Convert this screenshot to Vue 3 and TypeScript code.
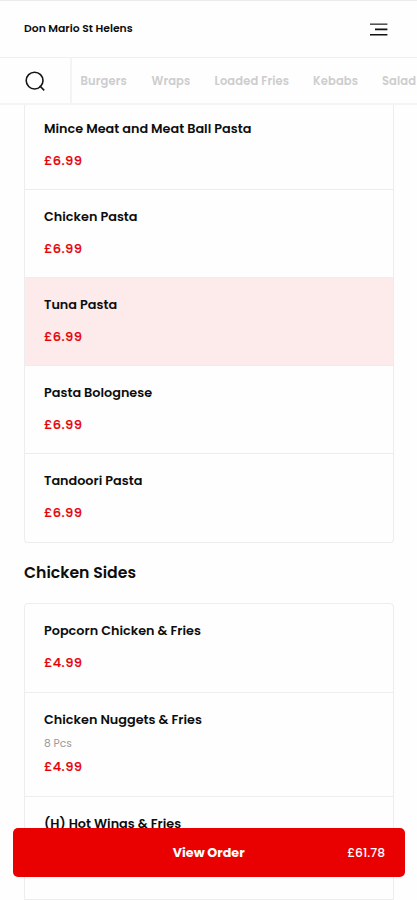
<script setup lang="ts">
interface MenuItem {
  name: string
  price: string
  note?: string
  active?: boolean
}

interface Category {
  label: string
  width: number
}

const categories: Category[] = [
  { label: 'Burgers', width: 47 },
  { label: 'Wraps', width: 39 },
  { label: 'Loaded Fries', width: 74.5 },
  { label: 'Kebabs', width: 45 },
  { label: 'Salad', width: 40 },
]

const pastas: MenuItem[] = [
  { name: 'Mince Meat and Meat Ball Pasta', price: '£6.99' },
  { name: 'Chicken Pasta', price: '£6.99' },
  { name: 'Tuna Pasta', price: '£6.99', active: true },
  { name: 'Pasta Bolognese', price: '£6.99' },
  { name: 'Tandoori Pasta', price: '£6.99' },
]

const sides: MenuItem[] = [
  { name: 'Popcorn Chicken & Fries', price: '£4.99' },
  { name: 'Chicken Nuggets & Fries', note: '8 Pcs', price: '£4.99' },
  { name: '(H) Hot Wings & Fries', price: '£4.99' },
]
</script>

<template>
  <div class="screen">
    <header class="topbar">
      <h1 class="brand">Don Mario St Helens</h1>
      <button class="icon-btn" aria-label="Menu">
        <svg width="18" height="13" viewBox="0 0 18 13">
          <path d="M0 1.2H17.4" stroke="#555" stroke-width="1.6" />
          <path d="M5 6.4H17.4M0 11.8H17.4" stroke="#111" stroke-width="1.6" />
        </svg>
      </button>
    </header>
    <nav class="tabs">
      <button class="icon-btn search" aria-label="Search">
        <svg width="21" height="21" viewBox="0 0 21 21" fill="none" stroke="#151515" stroke-width="1.6">
          <circle cx="9.6" cy="9.6" r="8.4" />
          <path d="M14.6 14.8L19.2 19.4" />
        </svg>
      </button>
      <div class="cats">
        <a v-for="c in categories" :key="c.label" class="cat" :style="{ width: c.width + 'px' }">{{ c.label }}</a>
      </div>
    </nav>
    <main class="menu">
      <section class="card first">
        <article v-for="i in pastas" :key="i.name" class="row" :class="{ active: i.active }">
          <h3 class="name">{{ i.name }}</h3>
          <p class="price">{{ i.price }}</p>
        </article>
      </section>
      <h2 class="heading">Chicken Sides</h2>
      <section class="card sides">
        <article v-for="i in sides" :key="i.name" class="row" :class="{ noted: i.note }">
          <h3 class="name">{{ i.name }}</h3>
          <p v-if="i.note" class="note">{{ i.note }}</p>
          <p class="price">{{ i.price }}</p>
        </article>
      </section>
    </main>
    <button class="order">
      <span></span>
      <span class="order-label">View Order</span>
      <span class="order-total">£61.78</span>
    </button>
  </div>
</template>

<style>
body {
  background: #fff;
}
</style>

<style scoped>
.screen {
  position: relative;
  display: flex;
  flex-direction: column;
  box-sizing: border-box;
  width: 100%;
  height: 900px;
  overflow: hidden;
  border-top: 1px solid #ebebeb;
  background: #fefefe;
  color: #0d0d0d;
  font-family: Poppins, Inter, "Liberation Sans", sans-serif;
}
h1, h2, h3, p {
  margin: 0;
}
button {
  font-family: inherit;
  border: 0;
  padding: 0;
}
.topbar {
  flex: none;
  display: flex;
  align-items: center;
  justify-content: space-between;
  box-sizing: border-box;
  height: 57px;
  padding: 0 29.5px 0 24px;
  border-bottom: 1px solid #f0f0f0;
}
.brand {
  font-size: 10.8px;
  font-weight: 600;
  line-height: 16px;
}
.icon-btn {
  display: flex;
  background: none;
}
.tabs {
  flex: none;
  position: relative;
  z-index: 1;
  display: flex;
  box-sizing: border-box;
  height: 47px;
  border-bottom: 2px solid #f4f4f4;
  background: #fefefe;
}
.search {
  flex: none;
  box-sizing: border-box;
  width: 72px;
  align-items: center;
  padding: 1px 0 0 25px;
  border-right: 2px solid #f4f4f4;
}
.cats {
  display: flex;
  align-items: center;
  gap: 24px;
  padding: 1px 0 0 8.5px;
  overflow: hidden;
}
.cat {
  flex: none;
  font-size: 11.5px;
  font-weight: 600;
  line-height: 16px;
  letter-spacing: 0.12px;
  color: #cdcdcd;
  white-space: nowrap;
}
.menu {
  display: flex;
  flex-direction: column;
  padding: 0 23.5px;
}
.card {
  flex: none;
  border: 1px solid #ededed;
  border-radius: 4px;
}
.card.first {
  margin-top: -3px;
  border-top: 0;
  border-radius: 0 0 4px 4px;
}
.card.sides {
  border-radius: 4px 4px 0 0;
}
.row {
  box-sizing: border-box;
  height: 88.2px;
  padding: 17px 19.5px 0;
  border-bottom: 1px solid #ededed;
}
.first .row:nth-child(n + 3) {
  height: 88px;
}
.row:last-child {
  border-bottom: 0;
}
.first .row:last-child {
  height: 87.6px;
}
.row.active {
  background: #fdeaea;
}
.sides .row:first-child {
  height: 89px;
}
.sides .row.noted {
  height: 103.6px;
}
.sides .row:last-child {
  height: 102.6px;
}
.name {
  font-size: 12.8px;
  font-weight: 600;
  line-height: 20px;
  white-space: nowrap;
}
.price {
  margin-top: 12px;
  font-size: 13px;
  font-weight: 500;
  line-height: 20px;
  color: #e60008;
  letter-spacing: 0.4px;
  -webkit-text-stroke: 0.2px #e60008;
}
.note {
  margin-top: 6px;
  font-size: 10.7px;
  line-height: 16px;
  color: #999;
}
.noted .price {
  margin-top: 5px;
}
.heading {
  margin: 18px 0;
  padding-left: 0.5px;
  font-size: 15.7px;
  font-weight: 600;
  line-height: 24px;
}
.order {
  position: absolute;
  z-index: 2;
  left: 12.5px;
  right: 12px;
  bottom: 23.4px;
  display: grid;
  grid-template-columns: 1fr auto 1fr;
  align-items: center;
  height: 48.2px;
  padding: 1px 20px 0;
  border-radius: 5px;
  background: #e90000;
  color: #fff;
}
.order-label {
  font-size: 12.7px;
  font-weight: 700;
}
.order-total {
  font-size: 12.3px;
  font-weight: 500;
  text-align: right;
}
</style>
